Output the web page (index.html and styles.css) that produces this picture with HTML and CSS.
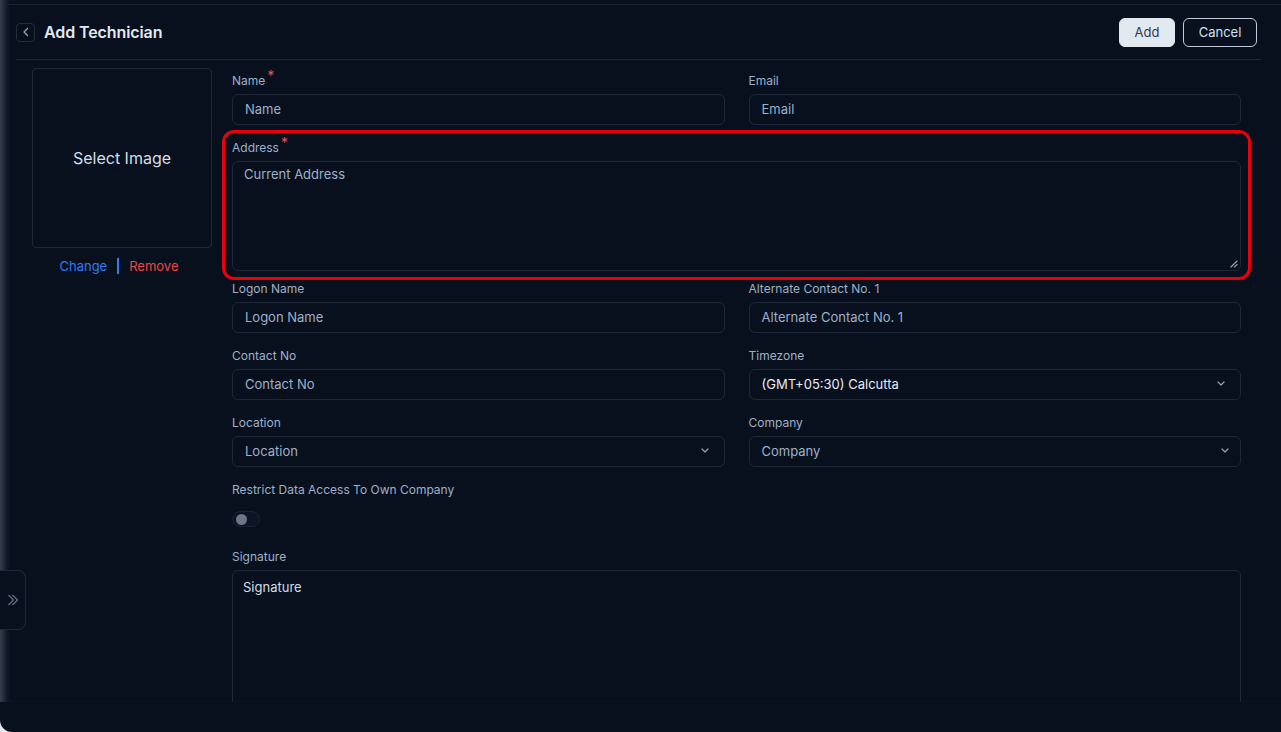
FILE: index.html
```html
<!DOCTYPE html>
<html lang="en">
<head>
<meta charset="utf-8">
<title>Add Technician</title>
<link rel="stylesheet" href="styles.css">
</head>
<body>
<div class="app">
  <div class="main">
    <div class="topline"></div>
    <header class="header">
      <div class="title-wrap">
        <button class="back-btn" type="button" aria-label="Back">
          <svg width="8" height="10" viewBox="0 0 8 10"><path d="M5.5 1.5 2 5l3.5 3.5" fill="none" stroke="#94a3b8" stroke-width="1.3" stroke-linecap="round" stroke-linejoin="round"/></svg>
        </button>
        <h1 class="title">Add Technician</h1>
      </div>
      <div class="actions">
        <button class="btn btn-primary" type="button">Add</button>
        <button class="btn btn-outline" type="button">Cancel</button>
      </div>
    </header>

    <div class="body">
      <aside class="image-col">
        <div class="image-box">Select Image</div>
        <div class="image-links">
          <span class="link-change">Change</span>
          <span class="link-sep"></span>
          <span class="link-remove">Remove</span>
        </div>
      </aside>

      <form class="form">
        <div class="field">
          <label class="label">Name<span class="req">*</span></label>
          <div class="input">Name</div>
        </div>
        <div class="field">
          <label class="label">Email</label>
          <div class="input">Email</div>
        </div>

        <div class="field field-wide field-address">
          <div class="highlight"></div>
          <label class="label">Address<span class="req">*</span></label>
          <div class="textarea">Current Address
            <svg class="resize" width="8" height="8" viewBox="0 0 8 8"><path d="M7 1 1 7M7 4.5 4.5 7" stroke="#9ca3af" stroke-width="1.2" stroke-linecap="square"/></svg>
          </div>
        </div>

        <div class="field">
          <label class="label">Logon Name</label>
          <div class="input">Logon Name</div>
        </div>
        <div class="field">
          <label class="label">Alternate Contact No. 1</label>
          <div class="input">Alternate Contact No. 1</div>
        </div>

        <div class="field">
          <label class="label">Contact No</label>
          <div class="input">Contact No</div>
        </div>
        <div class="field">
          <label class="label">Timezone</label>
          <div class="input select select-tz"><span class="value">(GMT+05:30) Calcutta</span>
            <svg width="8" height="5" viewBox="0 0 8 5"><path d="M1 1l3 3 3-3" fill="none" stroke="#94a3b8" stroke-width="1.2" stroke-linecap="round" stroke-linejoin="round"/></svg>
          </div>
        </div>

        <div class="field">
          <label class="label">Location</label>
          <div class="input select select-loc"><span>Location</span>
            <svg width="8" height="5" viewBox="0 0 8 5"><path d="M1 1l3 3 3-3" fill="none" stroke="#94a3b8" stroke-width="1.2" stroke-linecap="round" stroke-linejoin="round"/></svg>
          </div>
        </div>
        <div class="field">
          <label class="label">Company</label>
          <div class="input select select-co"><span>Company</span>
            <svg width="8" height="5" viewBox="0 0 8 5"><path d="M1 1l3 3 3-3" fill="none" stroke="#94a3b8" stroke-width="1.2" stroke-linecap="round" stroke-linejoin="round"/></svg>
          </div>
        </div>

        <div class="field field-wide field-toggle">
          <label class="label">Restrict Data Access To Own Company</label>
          <div class="toggle"><span class="knob"></span></div>
        </div>

        <div class="field field-wide">
          <label class="label">Signature</label>
          <div class="textarea textarea-sig">Signature</div>
        </div>
      </form>
    </div>

    <button class="expander" type="button" aria-label="Expand">
      <svg width="12" height="14" viewBox="0 0 12 14"><path d="M1.5 2l5 5-5 5M5.5 2l5 5-5 5" fill="none" stroke="#64748b" stroke-width="1.1" stroke-linejoin="round"/></svg>
    </button>
  </div>
  <div class="footer"></div>
</div>
</body>
</html>
```

FILE: styles.css
```css
* { box-sizing: border-box; }

html, body {
  margin: 0;
  padding: 0;
}

body {
  background: #e6e8ec;
  font-family: Inter, "Noto Sans", "Liberation Sans", sans-serif;
  width: 1281px;
  height: 732px;
  overflow: hidden;
}

.app {
  width: 1281px;
  height: 732px;
  background: #08101e;
  border-bottom-left-radius: 12px;
  display: flex;
  flex-direction: column;
  overflow: hidden;
}

.main {
  position: relative;
  height: 702px;
  display: flex;
  flex-direction: column;
  box-shadow: inset 9px 0 7px -5px rgba(120, 132, 150, 0.45);
}

.topline {
  height: 5px;
  border-bottom: 1px solid #1b2331;
  margin-left: 6px;
}

.header {
  height: 55px;
  margin: 0 20px 0 16px;
  padding-right: 4px;
  border-bottom: 1px solid #1d2734;
  display: flex;
  align-items: center;
  justify-content: space-between;
}

.title-wrap {
  display: flex;
  align-items: center;
  gap: 9px;
}

.back-btn {
  width: 19px;
  height: 19px;
  padding: 0;
  background: transparent;
  border: 1px solid #222d3c;
  border-radius: 4px;
  display: flex;
  align-items: center;
  justify-content: center;
}

.title {
  margin: 0;
  font-size: 16px;
  font-weight: 600;
  color: #e2e8f0;
  letter-spacing: -0.1px;
}

.actions {
  display: flex;
  gap: 8px;
}

.btn {
  height: 29px;
  font-family: inherit;
  font-size: 13px;
  border-radius: 6px;
  padding: 0;
}

.btn-primary {
  width: 56px;
  background: #e2e8f0;
  color: #2b3a55;
  border: 1px solid #e2e8f0;
}

.btn-outline {
  width: 74px;
  background: transparent;
  color: #cfe0f7;
  border: 1px solid #c4cbd6;
}

.body {
  flex: 1;
  display: flex;
  padding: 8px 40px 0 32px;
  overflow: hidden;
}

.image-col {
  width: 180px;
  margin-right: 20px;
  flex-shrink: 0;
}

.image-box {
  width: 180px;
  height: 180px;
  border: 1px solid #1e2838;
  border-radius: 4px;
  display: flex;
  align-items: center;
  justify-content: center;
  color: #d6dde8;
  font-size: 16px;
}

.image-links {
  display: flex;
  justify-content: center;
  align-items: center;
  gap: 10px;
  margin-top: 10px;
  padding-right: 6px;
  font-size: 13px;
  line-height: 16px;
}

.link-change { color: #2f7cf6; }
.link-remove { color: #ef4444; }
.link-sep {
  width: 2px;
  height: 16px;
  background: #2f7cf6;
}

.form {
  flex: 1;
  display: grid;
  grid-template-columns: 1fr 1fr;
  column-gap: 24px;
  row-gap: 15px;
  align-content: start;
  margin: 5px 0 0;
}

.field {
  display: flex;
  flex-direction: column;
  position: relative;
}

.field-wide { grid-column: 1 / span 2; }

.label {
  font-size: 12px;
  line-height: 16px;
  color: #9fb0c8;
  margin-bottom: 5px;
}

.req {
  color: #f05252;
  font-size: 14px;
  position: relative;
  top: -4px;
  margin-left: 2px;
  line-height: 0;
}

.input {
  height: 31px;
  border: 1px solid #1e2838;
  border-radius: 6px;
  padding: 0 12px 2px;
  display: flex;
  align-items: center;
  font-size: 13px;
  color: #9fb0c8;
}

.select { justify-content: space-between; }
.select-tz { padding-right: 15px; }
.select-loc { padding-right: 15px; }
.select-co { padding-right: 11px; }
.select .value { color: #e6ebf2; }

.textarea {
  position: relative;
  height: 110px;
  border: 1px solid #1e2838;
  border-radius: 6px;
  padding: 4px 11px;
  font-size: 13px;
  line-height: 16px;
  color: #9fb0c8;
}

.field-address { margin-bottom: -5px; }

.resize {
  position: absolute;
  right: 2px;
  bottom: 2px;
}

.highlight {
  position: absolute;
  left: -10px;
  right: -10px;
  top: -10px;
  bottom: -9px;
  border: 3px solid #e8000d;
  border-radius: 12px;
  pointer-events: none;
}

.field-toggle { margin-bottom: 7px; }

.toggle {
  margin-top: 8px;
  width: 28px;
  height: 16px;
  border: 1px solid #1a2434;
  background: #0d1524;
  border-radius: 8px;
  position: relative;
}

.knob {
  position: absolute;
  left: 3px;
  top: 2px;
  width: 11px;
  height: 11px;
  border-radius: 50%;
  background: #6b7689;
}

.textarea-sig {
  height: 160px;
  padding: 8px 10px;
  color: #d6dde8;
}

.expander {
  position: absolute;
  left: 0;
  top: 570px;
  width: 26px;
  height: 60px;
  padding: 0;
  background: #08101e;
  border: 1px solid #1e2838;
  border-left: none;
  border-radius: 0 8px 8px 0;
  display: flex;
  align-items: center;
  justify-content: center;
}

.footer {
  height: 30px;
}
```
